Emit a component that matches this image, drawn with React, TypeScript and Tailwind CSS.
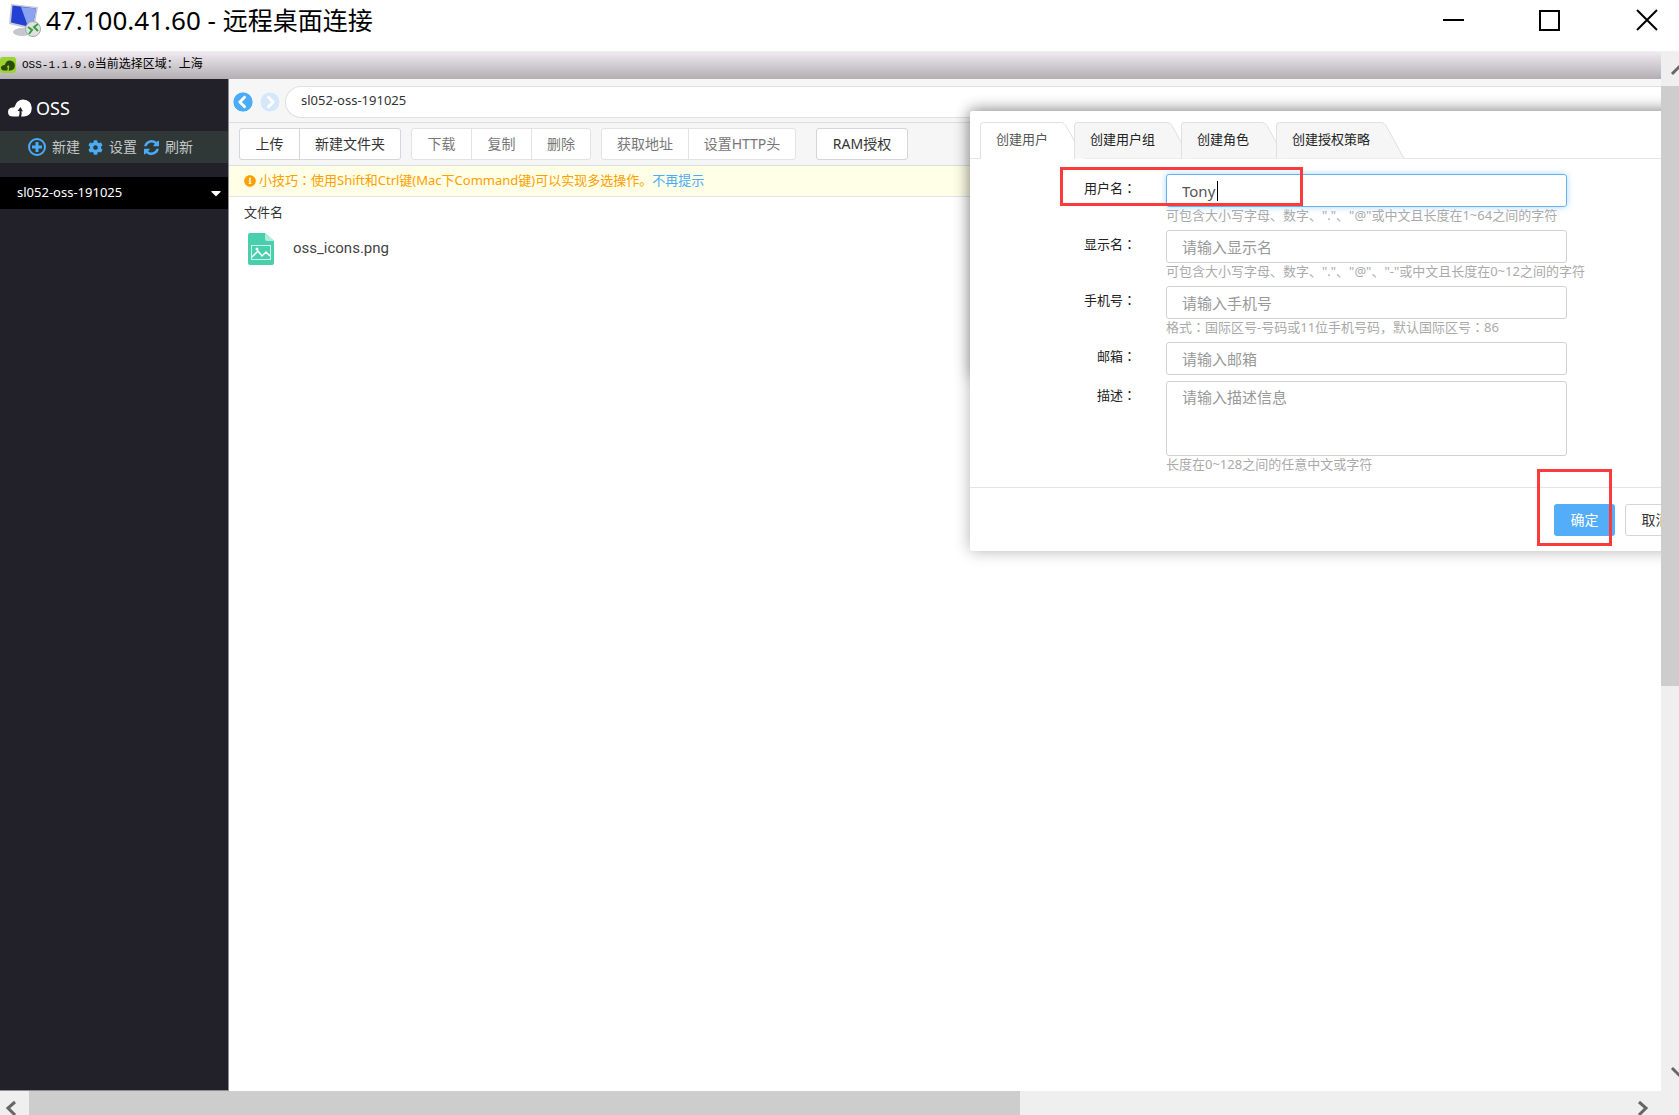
import type { ReactNode } from 'react'
import { FaCaretDown, FaChevronCircleLeft, FaChevronCircleRight, FaCog, FaInfoCircle } from 'react-icons/fa'

type Field = {
  id: string
  label: string
  placeholder: string
  hint?: string
  value?: string
  multiline?: boolean
}

const fields: Field[] = [
  {
    id: 'username',
    label: '用户名：',
    placeholder: '请输入用户名',
    value: 'Tony',
    hint: '可包含大小写字母、数字、"."、"@"或中文且长度在1~64之间的字符',
  },
  {
    id: 'display',
    label: '显示名：',
    placeholder: '请输入显示名',
    hint: '可包含大小写字母、数字、"."、"@"、"-"或中文且长度在0~12之间的字符',
  },
  {
    id: 'phone',
    label: '手机号：',
    placeholder: '请输入手机号',
    hint: '格式：国际区号-号码或11位手机号码，默认国际区号：86',
  },
  { id: 'email', label: '邮箱：', placeholder: '请输入邮箱' },
  {
    id: 'desc',
    label: '描述：',
    placeholder: '请输入描述信息',
    hint: '长度在0~128之间的任意中文或字符',
    multiline: true,
  },
]

const tabs = [
  { label: '创建用户', box: 'w-[94px]', width: 104 },
  { label: '创建用户组', box: 'w-[107px]', width: 116 },
  { label: '创建角色', box: 'w-[95px]', width: 104 },
  { label: '创建授权策略', box: 'w-[128px]', width: 128 },
]

export default function App() {
  return (
    <div className="flex h-screen flex-col overflow-hidden bg-white font-['Noto_Sans','Noto_Sans_CJK_SC',sans-serif] text-[#333]">
      <TitleBar />
      <div className="flex min-h-0 flex-1">
        <div className="flex min-w-0 flex-1 flex-col">
          <AppBar />
          <div className="flex min-h-0 flex-1">
            <Sidebar />
            <main className="relative min-w-0 flex-1 overflow-hidden border-l border-[#8e8d93]">
              <AddressBar />
              <Toolbar />
              <Tip />
              <FileList />
              <CreateDialog />
            </main>
          </div>
        </div>
        <VerticalScroll />
      </div>
      <HorizontalScroll />
    </div>
  )
}

// full-width colons sit in the middle of their cell, as in the TC face
function Cjk({ text }: { text: string }) {
  return (
    <>
      {text.split(/(：)/).map((part, i) =>
        part === '：' ? (
          <span key={i} className="font-['Noto_Sans_CJK_TC',sans-serif] leading-none">
            {part}
          </span>
        ) : (
          part
        ),
      )}
    </>
  )
}

function TitleBar() {
  return (
    <header className="flex h-[51px] shrink-0 items-start pl-2">
      <RemoteIcon />
      <h1 className="ml-1 mt-[3px] flex-1 text-[25px] leading-[34px] text-black">
        <span className="text-[26px]">47.100.41.60 - </span>远程桌面连接
      </h1>
      <div className="mr-5 mt-2 flex gap-[72px]">
        <button aria-label="最小化">
          <svg width="24" height="24" viewBox="0 0 24 24" stroke="#000" strokeWidth="2">
            <path d="M0 12H21" />
          </svg>
        </button>
        <button aria-label="最大化">
          <svg width="24" height="24" viewBox="0 0 24 24" fill="none" stroke="#000" strokeWidth="2">
            <rect x="1" y="3" width="19" height="19" />
          </svg>
        </button>
        <button aria-label="关闭">
          <svg width="24" height="24" viewBox="0 0 24 24" stroke="#000" strokeWidth="2">
            <path d="M2 2L22 22M22 2L2 22" />
          </svg>
        </button>
      </div>
    </header>
  )
}

function AppBar() {
  return (
    <div className="flex h-7 shrink-0 items-center gap-[6px] bg-linear-to-b from-[#f1ecf1] to-[#b2afb3]">
      <span className="flex h-4 w-4 items-center justify-center rounded-[3px] bg-[#9bd432] text-[#2c4a0b]">
        <CloudLogo className="h-[11px] w-[14px]" hole="#9bd432" />
      </span>
      <span className="font-['Liberation_Mono','Noto_Sans_CJK_SC',monospace] text-xs text-black">
        <span className="text-[11px]">OSS-1.1.9.0</span>当前选择区域：上海
      </span>
    </div>
  )
}

function Sidebar() {
  return (
    <aside className="flex w-[228px] shrink-0 flex-col border-b border-[#8e8d93] bg-[#222029]">
      <div className="flex h-[52px] items-center gap-1 pl-2 pt-[6px] text-lg text-white">
        <CloudLogo className="h-[18px] w-6" hole="#222029" />
        OSS
      </div>
      <div className="flex h-8 items-center bg-[#303837] pl-[27px] text-sm text-[#c5c9c9]">
        <button className="flex items-center gap-[5px]">
          <svg className="h-5 w-5 text-[#4aabf7]" viewBox="0 0 20 20" fill="none" stroke="currentColor">
            <circle cx="10" cy="10" r="8" strokeWidth="2" />
            <path d="M10 5V15M5 10H15" strokeWidth="3" />
          </svg>
          新建
        </button>
        <button className="ml-2 flex items-center gap-[6px]">
          <FaCog className="h-[15px] w-[15px] text-[#4aabf7]" />
          设置
        </button>
        <button className="ml-[7px] flex items-center gap-[6px]">
          <svg className="h-[15px] w-[15px] text-[#4aabf7]" viewBox="0 0 1536 1536" fill="currentColor">
            <path d="M1511 928q0 5-1 7-64 268-268 434.5t-478 166.5q-146 0-282.5-55t-243.5-157l-129 129q-19 19-45 19t-45-19-19-45v-448q0-26 19-45t45-19h448q26 0 45 19t19 45-19 45l-137 137q71 66 161 102t187 36q134 0 250-65t186-179q11-17 53-117 8-23 30-23h192q13 0 22.5 9.5t9.5 22.5zm25-800v448q0 26-19 45t-45 19h-448q-26 0-45-19t-19-45 19-45l138-138q-148-137-349-137-134 0-250 65t-186 179q-11 17-53 117-8 23-30 23h-199q-13 0-22.5-9.5t-9.5-22.5v-7q65-268 270-434.5t480-166.5q146 0 284 55.5t245 156.5l130-129q19-19 45-19t45 19 19 45z" />
          </svg>
          刷新
        </button>
      </div>
      <button className="mt-[14px] flex h-8 items-center justify-between bg-black pl-[17px] pr-[7px] text-[13px] text-white">
        sl052-oss-191025
        <FaCaretDown className="h-4 w-[10px]" />
      </button>
    </aside>
  )
}

function AddressBar() {
  return (
    <div className="flex h-11 items-center border-b border-[#dcdfe0] bg-[#f6f6f6] pl-1 pt-[2px]">
      <button aria-label="后退" className="text-[#4aabf7]">
        <FaChevronCircleLeft className="h-5 w-5 rounded-full bg-white" />
      </button>
      <button aria-label="前进" className="ml-[7px] text-[#d4e8f9]">
        <FaChevronCircleRight className="h-5 w-5 rounded-full bg-white" />
      </button>
      <input
        aria-label="路径"
        defaultValue="sl052-oss-191025"
        className="ml-[5px] h-8 min-w-0 flex-1 rounded-l-full border border-r-0 border-[#dfe0e2] bg-white pb-1 pl-[15px] text-[13px] text-[#333] outline-none"
      />
    </div>
  )
}

function ButtonGroup({ children, muted }: { children: ReactNode; muted?: boolean }) {
  return (
    <div
      className={
        muted
          ? 'flex h-8 divide-x divide-[#e1e3e6] rounded-[3px] border border-[#e1e3e6] bg-white text-sm text-[#777]'
          : 'flex h-8 divide-x divide-[#d5d5df] rounded-[3px] border border-[#d5d5df] bg-white text-sm text-[#333]'
      }
    >
      {children}
    </div>
  )
}

function Toolbar() {
  return (
    <div className="flex h-[43px] items-center gap-[10px] border-b border-[#dcdfe0] bg-[#f6f6f6] pl-[10px]">
      <ButtonGroup>
        <button className="w-[60px]">上传</button>
        <button className="w-[100px]">新建文件夹</button>
      </ButtonGroup>
      <ButtonGroup muted>
        <button className="w-[60px]">下载</button>
        <button className="w-[60px]">复制</button>
        <button className="w-[58px]">删除</button>
      </ButtonGroup>
      <ButtonGroup muted>
        <button className="w-[87px]">获取地址</button>
        <button className="w-[106px]">设置HTTP头</button>
      </ButtonGroup>
      <div className="ml-[10px]">
        <ButtonGroup>
          <button className="w-[90px]">RAM授权</button>
        </ButtonGroup>
      </div>
    </div>
  )
}

function Tip() {
  return (
    <div className="flex h-[31px] items-center border-b border-[#e3e4e0] bg-[#fffee6] pl-[15px] text-[13px] text-[#ff9f00]">
      <FaInfoCircle className="mr-[3px] h-3 w-3" />
      <p>
        <Cjk text="小技巧：使用Shift和Ctrl键(Mac下Command键)可以实现多选操作。" />
      </p>
      <a href="#hide" className="text-[#4aabf7]">
        不再提示
      </a>
    </div>
  )
}

function FileList() {
  return (
    <section>
      <h2 className="px-[15px] pt-[3px] text-[13px] leading-6">文件名</h2>
      <div className="flex items-center gap-[19px] pl-[19px] pt-[9px]">
        <svg width="26" height="32" viewBox="0 0 26 32">
          <path d="M2 0H17L26 8V30Q26 32 24 32H2Q0 32 0 30V2Q0 0 2 0Z" fill="#48cfad" />
          <path d="M17 0L26 8H19Q17 8 17 6Z" fill="#b5ebdc" />
          <rect x="3.500" y="12.500" width="19" height="14" fill="none" stroke="#d3f4eb" />
          <path d="M4 24L10 18L14 23L18 19L22 23" fill="none" stroke="#fff" strokeWidth="1.500" />
          <circle cx="9" cy="16" r="1.500" fill="#fff" />
        </svg>
        <span className="pb-[2px] font-[Roboto,sans-serif] text-[15px] text-[#444]">oss_icons.png</span>
      </div>
    </section>
  )
}

function CreateDialog() {
  return (
    <>
      {/* panel underneath, only its shadow shows */}
      <div className="absolute -right-10 left-[741px] top-8 h-[266px] rounded-[3px] bg-white shadow-[0_0_16px_rgba(0,0,0,0.3)]" />
      <div
        role="dialog"
        aria-label="创建用户"
        className="absolute -right-10 left-[741px] top-8 rounded-[3px] bg-white shadow-[0_0_16px_rgba(0,0,0,0.3)]"
      >
        <div role="tablist" className="flex border-b border-[#e4e5e7] pl-[10px] pt-[11px]">
          {tabs.map((tab, i) => (
            <Tab key={tab.label} {...tab} active={i === 0} />
          ))}
        </div>
        <form className="pb-2 pt-[15px]">
          {fields.map((f) => (
            <FieldRow key={f.id} field={f} />
          ))}
        </form>
        <div className="flex h-16 items-center justify-end gap-[10px] border-t border-[#e4e5e7] pr-[15px] text-sm">
          <div className="relative">
            <button className="h-8 w-[61px] rounded-[3px] bg-[#53adf8] text-white">确定</button>
            <span className="pointer-events-none absolute -left-[17px] -top-[35px] h-[77px] w-[75px] border-3 border-[#fb3b3b]" />
          </div>
          <button className="h-8 w-[61px] rounded-[3px] border border-[#d5d5df] text-[#333]">取消</button>
        </div>
      </div>
    </>
  )
}

function Tab({ label, box, width, active }: { label: string; box: string; width: number; active: boolean }) {
  const top = width - 20
  return (
    <button
      role="tab"
      aria-selected={active}
      className={`relative h-9 shrink-0 pl-4 text-left text-[13px] ${box} ${active ? 'text-[#555]' : 'text-[#222]'}`}
    >
      <svg className="absolute left-0 top-0 overflow-visible" width={width} height="37" fill="none">
        <path
          d={`M0.500 36.500V3.500Q0.500 0.500 3.500 0.500H${top - 3}Q${top} 0.500 ${top + 2} 3.500L${width} 36.500`}
          fill={active ? '#fff' : '#f6f6f6'}
          stroke="#dfe0e2"
        />
        {active && <path d={`M1 36.500H${width}`} stroke="#fff" />}
      </svg>
      <span className="relative whitespace-nowrap">{label}</span>
    </button>
  )
}

function FieldRow({ field }: { field: Field }) {
  const focused = field.value !== undefined
  return (
    <div className="relative mb-[6px] flex items-start">
      <label htmlFor={field.id} className="w-[166px] pt-[2px] text-right text-[13px] leading-6 text-[#222]">
        <Cjk text={field.label} />
      </label>
      <div className="ml-[30px] w-[401px]">
        {field.multiline ? (
          <textarea
            id={field.id}
            placeholder={field.placeholder}
            className="block h-[75px] w-full resize-none rounded-[3px] border border-[#d0d1d4] px-[15px] pt-1 text-[15px] outline-none placeholder:text-[#999]"
          />
        ) : (
          <input
            id={field.id}
            placeholder={field.placeholder}
            defaultValue={field.value}
            className={`block h-[33px] w-full rounded-[3px] border px-[15px] text-[15px] outline-none placeholder:text-[#999] ${
              focused ? 'border-[#66b1f0] text-[#555] shadow-[0_0_6px_rgba(83,173,248,0.5)]' : 'border-[#d0d1d4]'
            }`}
          />
        )}
        {field.hint && (
          <p className="whitespace-nowrap text-[13px] leading-[17px] text-[#aaa]">
            <Cjk text={field.hint} />
          </p>
        )}
      </div>
      {focused && (
        <>
          <span className="absolute left-[247px] top-[7px] h-5 w-px bg-black" />
          <span className="pointer-events-none absolute -top-[7px] left-[90px] h-[39px] w-[243px] border-3 border-[#fb3b3b]" />
        </>
      )}
    </div>
  )
}

function VerticalScroll() {
  return (
    <div className="flex w-[18px] shrink-0 flex-col overflow-hidden bg-[#efefef]">
      <svg className="h-[35px] shrink-0" viewBox="0 0 18 35" fill="none" stroke="#666" strokeWidth="3">
        <path d="M11 23L20 14" />
      </svg>
      <div className="basis-[600px] bg-[#cdcdcd]" />
      <svg className="mt-auto h-9 shrink-0" viewBox="0 0 18 36" fill="none" stroke="#666" strokeWidth="3">
        <path d="M11 13L20 22" />
      </svg>
    </div>
  )
}

function HorizontalScroll() {
  return (
    <div className="flex h-6 shrink-0 overflow-hidden bg-[#efefef]">
      <svg className="h-6 w-[29px] shrink-0" viewBox="0 0 29 24" fill="none" stroke="#666" strokeWidth="3">
        <path d="M15 11L8 17L15 24" />
      </svg>
      <div className="w-[59%] bg-[#cdcdcd]" />
      <svg className="ml-auto mr-[18px] h-6 w-[29px] shrink-0" viewBox="0 0 29 24" fill="none" stroke="#666" strokeWidth="3">
        <path d="M7 11L14 17L7 24" />
      </svg>
    </div>
  )
}

function CloudLogo({ className, hole }: { className: string; hole: string }) {
  return (
    <svg className={className} viewBox="0 0 24 18" fill="currentColor">
      <path d="M5 17.500Q0 17.500 0 13Q0 8.500 5 8.500Q6.500 8.500 7 7Q9 0.500 15 0.500Q23.500 1 23.800 9Q23.500 17 16 17.500Z" />
      <path d="M12.500 8L15 12.500L13.500 12Q14 15 13 18H10.500Q12 15 11.500 12L9.500 12Z" fill={hole} />
    </svg>
  )
}

function RemoteIcon() {
  return (
    <svg className="mt-1 shrink-0" width="34" height="34" viewBox="0 0 34 34">
      <ellipse cx="14" cy="28" rx="9" ry="4" fill="#c4c8ce" />
      <path d="M3 0L30 3L26 26L1 20Z" fill="#c5cbd9" />
      <path d="M4.500 1.500L28 4.500L24.500 23.500L3 18.500Z" fill="#2340d0" />
      <path d="M13 3L28 4.500L24.500 23.500L20 22.500Z" fill="#8aa4f2" />
      <circle cx="25" cy="25" r="7.500" fill="#dfe2e0" stroke="#a3a7a5" />
      <path d="M20 23L24 26L21 30M30 20L26 23L30 27" fill="none" stroke="#35a045" strokeWidth="2" />
    </svg>
  )
}
